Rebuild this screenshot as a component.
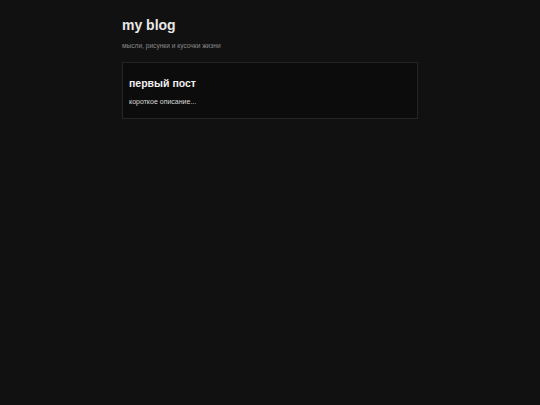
import React from 'react';

export default function App() {
  return (
    <div className="min-h-[405px] w-full bg-[#111111] font-['Liberation_Sans',Arial,sans-serif]">
      <div className="mx-auto w-[296px] pt-[16px]">
        {/* Header */}
        <h1 className="text-[14px] font-bold leading-[18px] text-[#e8e8e8]">my blog</h1>
        <p className="mt-[7px] text-[6.6px] leading-[9px] text-[#8a8a8a]">мысли, рисунки и кусочки жизни</p>

        {/* Posts */}
        <div className="mt-[12px] border border-[#252525] bg-[#0c0c0c] px-[6px] pt-[13px] pb-[12px]">
          <h2 className="text-[10.5px] font-bold leading-[14px] text-[#f0f0f0]">первый пост</h2>
          <p className="mt-[7px] text-[7px] leading-[9px] text-[#d8d8d8]">короткое описание...</p>
        </div>
      </div>
    </div>
  );
}
